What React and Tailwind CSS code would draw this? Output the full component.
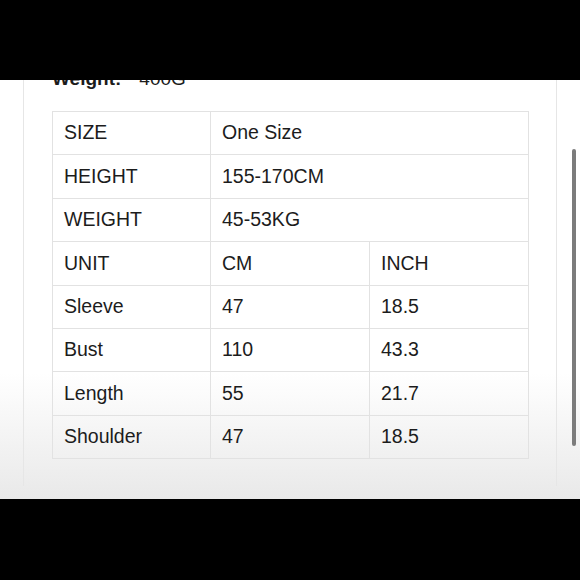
import React from "react";

const rows = [
  ["SIZE", "One Size"],
  ["HEIGHT", "155-170CM"],
  ["WEIGHT", "45-53KG"],
  ["UNIT", "CM", "INCH"],
  ["Sleeve", "47", "18.5"],
  ["Bust", "110", "43.3"],
  ["Length", "55", "21.7"],
  ["Shoulder", "47", "18.5"],
];

export default function App() {
  return (
    <div
      className="w-[580px] h-[580px] bg-black flex flex-col"
      style={{ fontFamily: '"Liberation Sans", Arial, sans-serif' }}
    >
      <div className="h-[80px] bg-black shrink-0" />
      <div className="relative h-[419px] shrink-0 overflow-hidden bg-linear-to-b from-white from-70% to-[#e9e9e9]">
        <div className="mx-[23px] h-full border-x border-[#e6e6e6] pl-[28px]">
          <div className="-mt-[13px] h-6 leading-6 text-[19px] text-[#1c1c1c]">
            <span className="font-bold">Weight:</span>
            <span className="ml-[18px]">400G</span>
          </div>
          <table className="mt-[20px] w-[476px] table-fixed border-collapse text-[19.5px] text-[#1c1c1c]">
            <colgroup>
              <col className="w-[158px]" />
              <col className="w-[159px]" />
              <col className="w-[159px]" />
            </colgroup>
            <tbody>
              {rows.map((r, i) => (
                <tr key={i} className="h-[43.4px]">
                  {r.map((c, j) => (
                    <td
                      key={j}
                      colSpan={r.length === 2 && j === 1 ? 2 : 1}
                      className="border border-[#e2e2e2] pl-[11px] p-0 align-middle leading-none"
                    >
                      {c}
                    </td>
                  ))}
                </tr>
              ))}
            </tbody>
          </table>
        </div>
        <div className="absolute left-[572px] top-[69px] w-[4px] h-[297px] rounded-full bg-[#7c7c7c]" />
      </div>
      <div className="flex-1 bg-black" />
    </div>
  );
}
